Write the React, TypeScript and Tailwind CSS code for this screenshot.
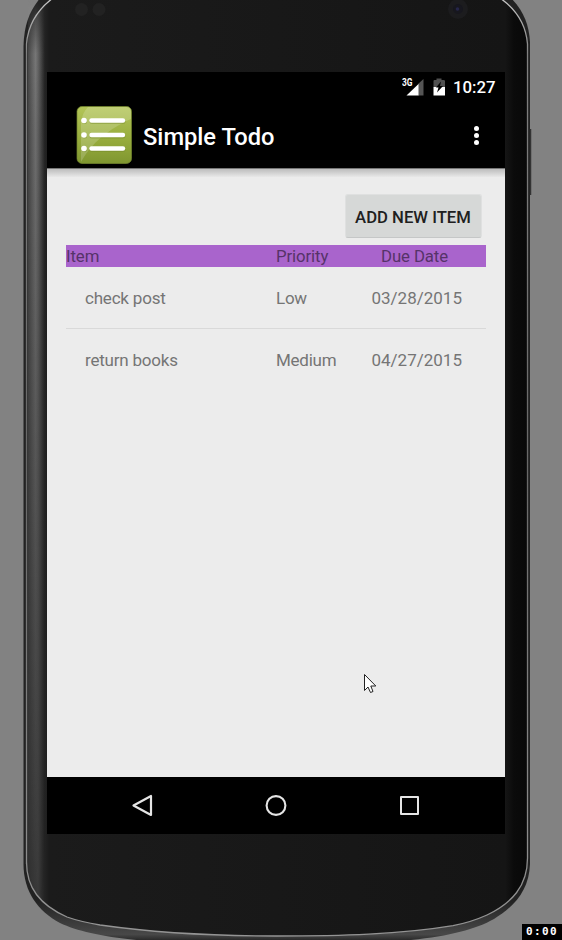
import React from "react";

const OUTER =
  "M23.5 46 C24 24 30 10 41 -3 L510 -3 C523 10 529 24 530 42 L530 864 C529 890 515 906 494 919 C460 938 400 945 276 945 C150 945 92 938 60 923 C38 911 23.500 892 23.500 864 Z";
const INNER =
  "M26.5 864 L26.5 44 C28 25 37 10 53 -2 L500 -2 C517 10 526 25 527.5 44 L527.5 858 C527.500 886 512 903 487 915 C476 920 464 923.500 453 925.700 C400 934.500 340 936 276 936 C210 936 150 932 100 925 C88 923 77 920.500 67 917 C40 905 26.500 888 26.5 862 Z";

function PhoneShell() {
  return (
    <svg className="absolute inset-0" width="562" height="940" viewBox="0 0 562 940" aria-hidden="true">
      <defs>
        <linearGradient id="face" gradientUnits="userSpaceOnUse" x1="26" y1="0" x2="528" y2="0">
          <stop offset="0" stopColor="#2c2c2c" />
          <stop offset="0.012" stopColor="#343434" />
          <stop offset="0.024" stopColor="#3a3a3a" />
          <stop offset="0.036" stopColor="#242424" />
          <stop offset="0.046" stopColor="#1b1b1b" />
          <stop offset="0.5" stopColor="#181818" />
          <stop offset="0.955" stopColor="#151515" />
          <stop offset="0.972" stopColor="#0b0b0b" />
          <stop offset="1" stopColor="#080808" />
        </linearGradient>
        <linearGradient id="sheen" x1="0" y1="0" x2="1" y2="0">
          <stop offset="0" stopColor="#999" stopOpacity="0.25" />
          <stop offset="0.45" stopColor="#999" stopOpacity="0.7" />
          <stop offset="1" stopColor="#777" stopOpacity="0" />
        </linearGradient>
        <linearGradient id="fade" x1="0" y1="0" x2="0" y2="1">
          <stop offset="0" stopColor="#000" />
          <stop offset="0.06" stopColor="#eee" />
          <stop offset="0.14" stopColor="#ccc" />
          <stop offset="0.5" stopColor="#777" />
          <stop offset="1" stopColor="#000" />
        </linearGradient>
        <linearGradient id="rim" x1="0" y1="0" x2="0" y2="1">
          <stop offset="0" stopColor="#c8c8c8" />
          <stop offset="0.06" stopColor="#808080" />
          <stop offset="0.5" stopColor="#686868" />
          <stop offset="1" stopColor="#949494" />
        </linearGradient>
        <linearGradient id="edge" gradientUnits="userSpaceOnUse" x1="0" y1="900" x2="0" y2="943">
          <stop offset="0" stopColor="#222" />
          <stop offset="0.8" stopColor="#484848" />
          <stop offset="1" stopColor="#1a1a1a" />
        </linearGradient>
        <mask id="band">
          <rect x="26" y="0" width="24" height="900" fill="url(#fade)" />
        </mask>
      </defs>
      <path d={OUTER} fill="url(#edge)" />
      <path d={INNER} fill="url(#face)" />
      <rect x="28" y="0" width="17" height="900" fill="url(#sheen)" mask="url(#band)" />
      <path d={INNER} fill="none" stroke="url(#rim)" strokeWidth="1.3" />
      <path d="M530.5 129V195" stroke="#333" strokeWidth="1.5" />
      <circle cx="81.5" cy="9.5" r="6.5" fill="#222" />
      <circle cx="99" cy="9.5" r="6.5" fill="#222" />
      <circle cx="458" cy="9" r="10" fill="#1c1c1e" />
      <circle cx="458" cy="9" r="5" fill="#17171e" />
      <circle cx="457.5" cy="9" r="1.8" fill="#26264a" />
    </svg>
  );
}

function StatusBar() {
  return (
    <div className="flex h-[31px] items-center justify-end pb-[1px] pr-[10px] text-white">
      <svg width="51" height="24" viewBox="0 0 51 24" className="shrink-0" aria-hidden="true">
        <text x="0" y="11" fontFamily="Roboto, sans-serif" fontSize="10" fontWeight="700" fill="#fff" textLength="10.500" lengthAdjust="spacingAndGlyphs">3G</text>
        <path d="M21.500 4V20.500H16V9Z" fill="#555" />
        <path d="M16.500 9V20.500H4.500Z" fill="#fff" />
        <path d="M31.500 7V6Q31.500 5 32.500 5H34.500V3.500H39.500V5H41.500Q43 5 43 6V12H31.500Z" fill="#505050" />
        <path d="M31.500 12H43V20.500H31.500Z" fill="#fff" />
        <path d="M39 6.500L34 12.500H36.500L35 17.500L41 11H38Z" fill="#000" />
      </svg>
      <span className="w-[42px] text-[16.8px] font-medium leading-[20px]">10:27</span>
    </div>
  );
}

function TodoIcon() {
  return (
    <svg width="58" height="60" viewBox="0 0 58 60" className="mb-[2px] shrink-0" aria-hidden="true">
      <defs>
        <linearGradient id="leaf" x1="0" y1="0" x2="0" y2="1">
          <stop offset="0" stopColor="#b3c558" />
          <stop offset="0.6" stopColor="#96ab3c" />
          <stop offset="1" stopColor="#7f9630" />
        </linearGradient>
      </defs>
      <rect x="1" y="1.500" width="54.500" height="57" rx="5" fill="url(#leaf)" stroke="#73872e" strokeOpacity="0.7" />
      <path d="M12 2H50Q55 2 55 6V14C40 21 18 33 5 57V18Q6 8 12 2Z" fill="#fff" fillOpacity="0.18" />
      {[15.5, 30, 43.5].map((y) => (
        <g key={y}>
          <g stroke="#718725" strokeOpacity="0.4" strokeLinecap="round" strokeWidth="5">
            <path d={`M16 ${y + 1}H47M8.500 ${y + 1}H8.600`} />
          </g>
          <circle cx="8" cy={y} r="2.800" fill="#fff" />
          <path d={`M15.500 ${y}H47`} stroke="#fff" strokeWidth="4.400" strokeLinecap="round" />
        </g>
      ))}
    </svg>
  );
}

function AppBar() {
  return (
    <header className="flex h-[65px] items-center pl-[29px] pr-[26px] text-white">
      <TodoIcon />
      <h1 className="ml-[9px] grow pt-[2px] text-[23.7px] font-medium leading-[28px]">Simple Todo</h1>
      <div className="flex flex-col gap-[2px]">
        <span className="size-[5px] rounded-full bg-white" />
        <span className="size-[5px] rounded-full bg-white" />
        <span className="size-[5px] rounded-full bg-white" />
      </div>
    </header>
  );
}

const items = [
  { name: "check post", priority: "Low", due: "03/28/2015" },
  { name: "return books", priority: "Medium", due: "04/27/2015" },
];

export default function App() {
  return (
    <div className="relative h-[940px] w-[562px] overflow-hidden bg-[#828282] pl-[47px] pt-[72px] font-['Roboto',sans-serif]">
      <PhoneShell />
      <div className="relative flex h-[762px] w-[458px] flex-col bg-black">
        <StatusBar />
        <AppBar />
        <main className="flex grow flex-col bg-[#ececec]">
          <div className="h-[9px] border-t border-[#777] bg-linear-to-b from-[#bdbdbd] to-[#e8e8e8]" />
          <div className="flex flex-col px-[19px] pt-[17px]">
            <button className="mr-[4px] h-[44px] w-[137px] self-end whitespace-nowrap rounded-[3px] border border-[#dfe0e0] border-b-[#c5c7c7] bg-[#d6d8d7] pr-[1px] pt-[3px] text-center text-[16.7px] font-medium leading-[39px] text-[#202020]">
              ADD NEW ITEM
            </button>
            <div className="mt-[7px] grid h-[22px] grid-cols-[210px_105px_105px] bg-[#a964cc] text-[16.8px] leading-[23px] tracking-[-0.1px] text-[#563368]">
              <span>Item</span>
              <span>Priority</span>
              <span>Due Date</span>
            </div>
            {items.map((item, i) => (
              <div
                key={item.name}
                className={`grid h-[62px] grid-cols-[191px_95.5px_105px] pl-[19px] text-[17px] leading-[62px] text-[#757575] ${i === 0 ? "border-b border-[#d9d9d9]" : ""}`}
              >
                <span className="tracking-[-0.2px]">{item.name}</span>
                <span className="tracking-[-0.25px]">{item.priority}</span>
                <span>{item.due}</span>
              </div>
            ))}
          </div>
        </main>
        <nav className="flex h-[57px] shrink-0 items-center justify-between px-[84px]">
          <svg width="24" height="24" viewBox="0 0 24 24" fill="none" stroke="#e5e5e5" strokeWidth="2.200" strokeLinejoin="round" aria-hidden="true">
            <path d="M20 2V21L2.500 11.500Z" />
          </svg>
          <svg width="24" height="24" viewBox="0 0 24 24" fill="none" stroke="#e5e5e5" strokeWidth="2.100" aria-hidden="true">
            <circle cx="12" cy="11.500" r="9.400" />
          </svg>
          <svg width="24" height="24" viewBox="0 0 24 24" fill="none" stroke="#e5e5e5" strokeWidth="2" strokeLinejoin="round" aria-hidden="true">
            <rect x="4" y="3" width="17" height="17" />
          </svg>
        </nav>
      </div>
      <svg className="absolute left-[364px] top-[674px]" width="13" height="20" viewBox="0 0 13 20" aria-hidden="true">
        <path d="M0.500 0.500V16.500L4 13L6.500 18.500L9 17.500L6.800 12H11.800Z" fill="#fff" stroke="#222" />
      </svg>
      <div className="absolute bottom-0 right-0 h-[16px] w-[40px] bg-black pl-[4px] font-['DejaVu_Sans_Mono',monospace] text-[11px] font-bold leading-[15px] tracking-[1.4px] text-white">
        0:00
      </div>
    </div>
  );
}
